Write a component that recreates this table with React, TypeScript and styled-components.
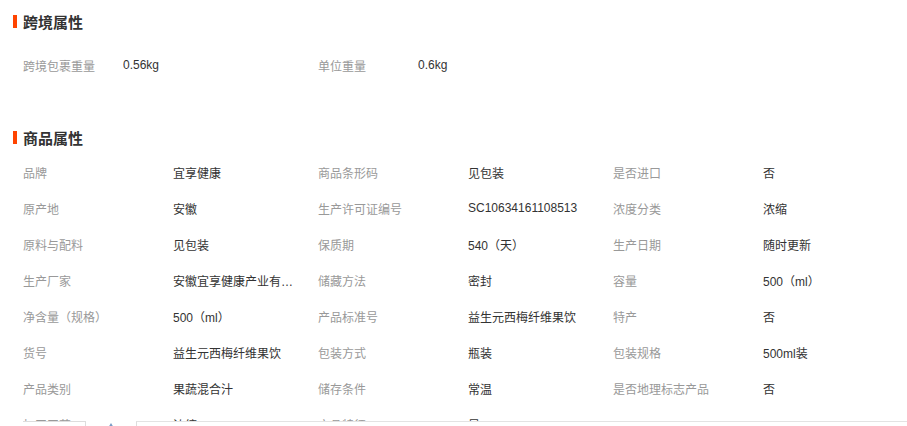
import React from "react";
import styled, { createGlobalStyle } from "styled-components";

type Attr = { label: string; value: string };

const GlobalStyle = createGlobalStyle`
  html, body {
    margin: 0;
    padding: 0;
    background: #ffffff;
  }
  body {
    font-family: "Liberation Sans", "Noto Sans CJK SC", sans-serif;
    font-size: 12px;
    color: #333333;
  }
`;

const Page = styled.div`
  padding: 11px 0 0 13px;
  height: 426px;
  overflow: hidden;
  box-sizing: border-box;
`;

const Section = styled.section<{ $gap: number }>`
  margin-bottom: ${(props) => props.$gap}px;
`;

const Title = styled.h3`
  display: flex;
  align-items: center;
  gap: 6px;
  margin: 0;
  height: 20px;
  font-size: 15px;
  font-weight: bold;
  color: #333333;

  &::before {
    content: "";
    width: 4px;
    height: 13px;
    background: #ff4400;
  }
`;

const AttrGrid = styled.div<{ $label: number; $value: number; $top: number }>`
  display: grid;
  grid-template-columns: repeat(
    3,
    ${(props) => props.$label}px ${(props) => props.$value}px
  );
  grid-auto-rows: 36px;
  align-items: center;
  margin-top: ${(props) => props.$top}px;
  padding-left: 10px;
`;

const Label = styled.span`
  color: #999999;
  white-space: nowrap;
`;

const Value = styled.span`
  color: #333333;
  white-space: nowrap;
  overflow: hidden;
  text-overflow: ellipsis;
  max-width: 122px;
`;

const BottomBar = styled.div`
  position: fixed;
  left: 0;
  right: 0;
  top: 421px;
  height: 40px;
  display: flex;
  align-items: flex-start;
`;

const SmallBox = styled.div`
  margin-left: 23px;
  width: 62px;
  height: 40px;
  background: #ffffff;
  border-top: 1px solid #dddddd;
  border-right: 1px solid #dddddd;
`;

const IconSlot = styled.div`
  width: 50px;
  height: 40px;
  background: #ffffff;
  display: flex;
  justify-content: center;
  padding-top: 2px;
  box-sizing: border-box;
`;

const WideBox = styled.div`
  flex: 1;
  height: 40px;
  background: #ffffff;
  border-top: 1px solid #e3e3e3;
  border-left: 1px solid #dddddd;
`;

const crossBorder: Attr[] = [
  { label: "跨境包裹重量", value: "0.56kg" },
  { label: "单位重量", value: "0.6kg" },
];

const productAttrs: Attr[] = [
  { label: "品牌", value: "宜享健康" },
  { label: "商品条形码", value: "见包装" },
  { label: "是否进口", value: "否" },
  { label: "原产地", value: "安徽" },
  { label: "生产许可证编号", value: "SC10634161108513" },
  { label: "浓度分类", value: "浓缩" },
  { label: "原料与配料", value: "见包装" },
  { label: "保质期", value: "540（天）" },
  { label: "生产日期", value: "随时更新" },
  { label: "生产厂家", value: "安徽宜享健康产业有限公司" },
  { label: "储藏方法", value: "密封" },
  { label: "容量", value: "500（ml）" },
  { label: "净含量（规格）", value: "500（ml）" },
  { label: "产品标准号", value: "益生元西梅纤维果饮" },
  { label: "特产", value: "否" },
  { label: "货号", value: "益生元西梅纤维果饮" },
  { label: "包装方式", value: "瓶装" },
  { label: "包装规格", value: "500ml装" },
  { label: "产品类别", value: "果蔬混合汁" },
  { label: "储存条件", value: "常温" },
  { label: "是否地理标志产品", value: "否" },
  { label: "加工工艺", value: "浓缩" },
  { label: "产品特征", value: "是" },
];

const renderAttrs = (list: Attr[]) =>
  list.map((a) => (
    <React.Fragment key={a.label}>
      <Label>{a.label}</Label>
      <Value>{a.value}</Value>
    </React.Fragment>
  ));

export default function App() {
  return (
    <>
      <GlobalStyle />
      <Page>
        <Section $gap={44}>
          <Title>跨境属性</Title>
          <AttrGrid $label={100} $value={195} $top={16}>
            {renderAttrs(crossBorder)}
          </AttrGrid>
        </Section>
        <Section $gap={0}>
          <Title>商品属性</Title>
          <AttrGrid $label={150} $value={145} $top={7}>
            {renderAttrs(productAttrs)}
          </AttrGrid>
        </Section>
      </Page>
      <BottomBar>
        <SmallBox />
        <IconSlot>
          <svg width="8" height="6" viewBox="0 0 8 6">
            <path d="M4 0 L7 5 L1 5 Z" fill="#7a9cc6" />
            <rect x="3" y="3" width="2" height="2" fill="#e8c36a" />
          </svg>
        </IconSlot>
        <WideBox />
      </BottomBar>
    </>
  );
}
